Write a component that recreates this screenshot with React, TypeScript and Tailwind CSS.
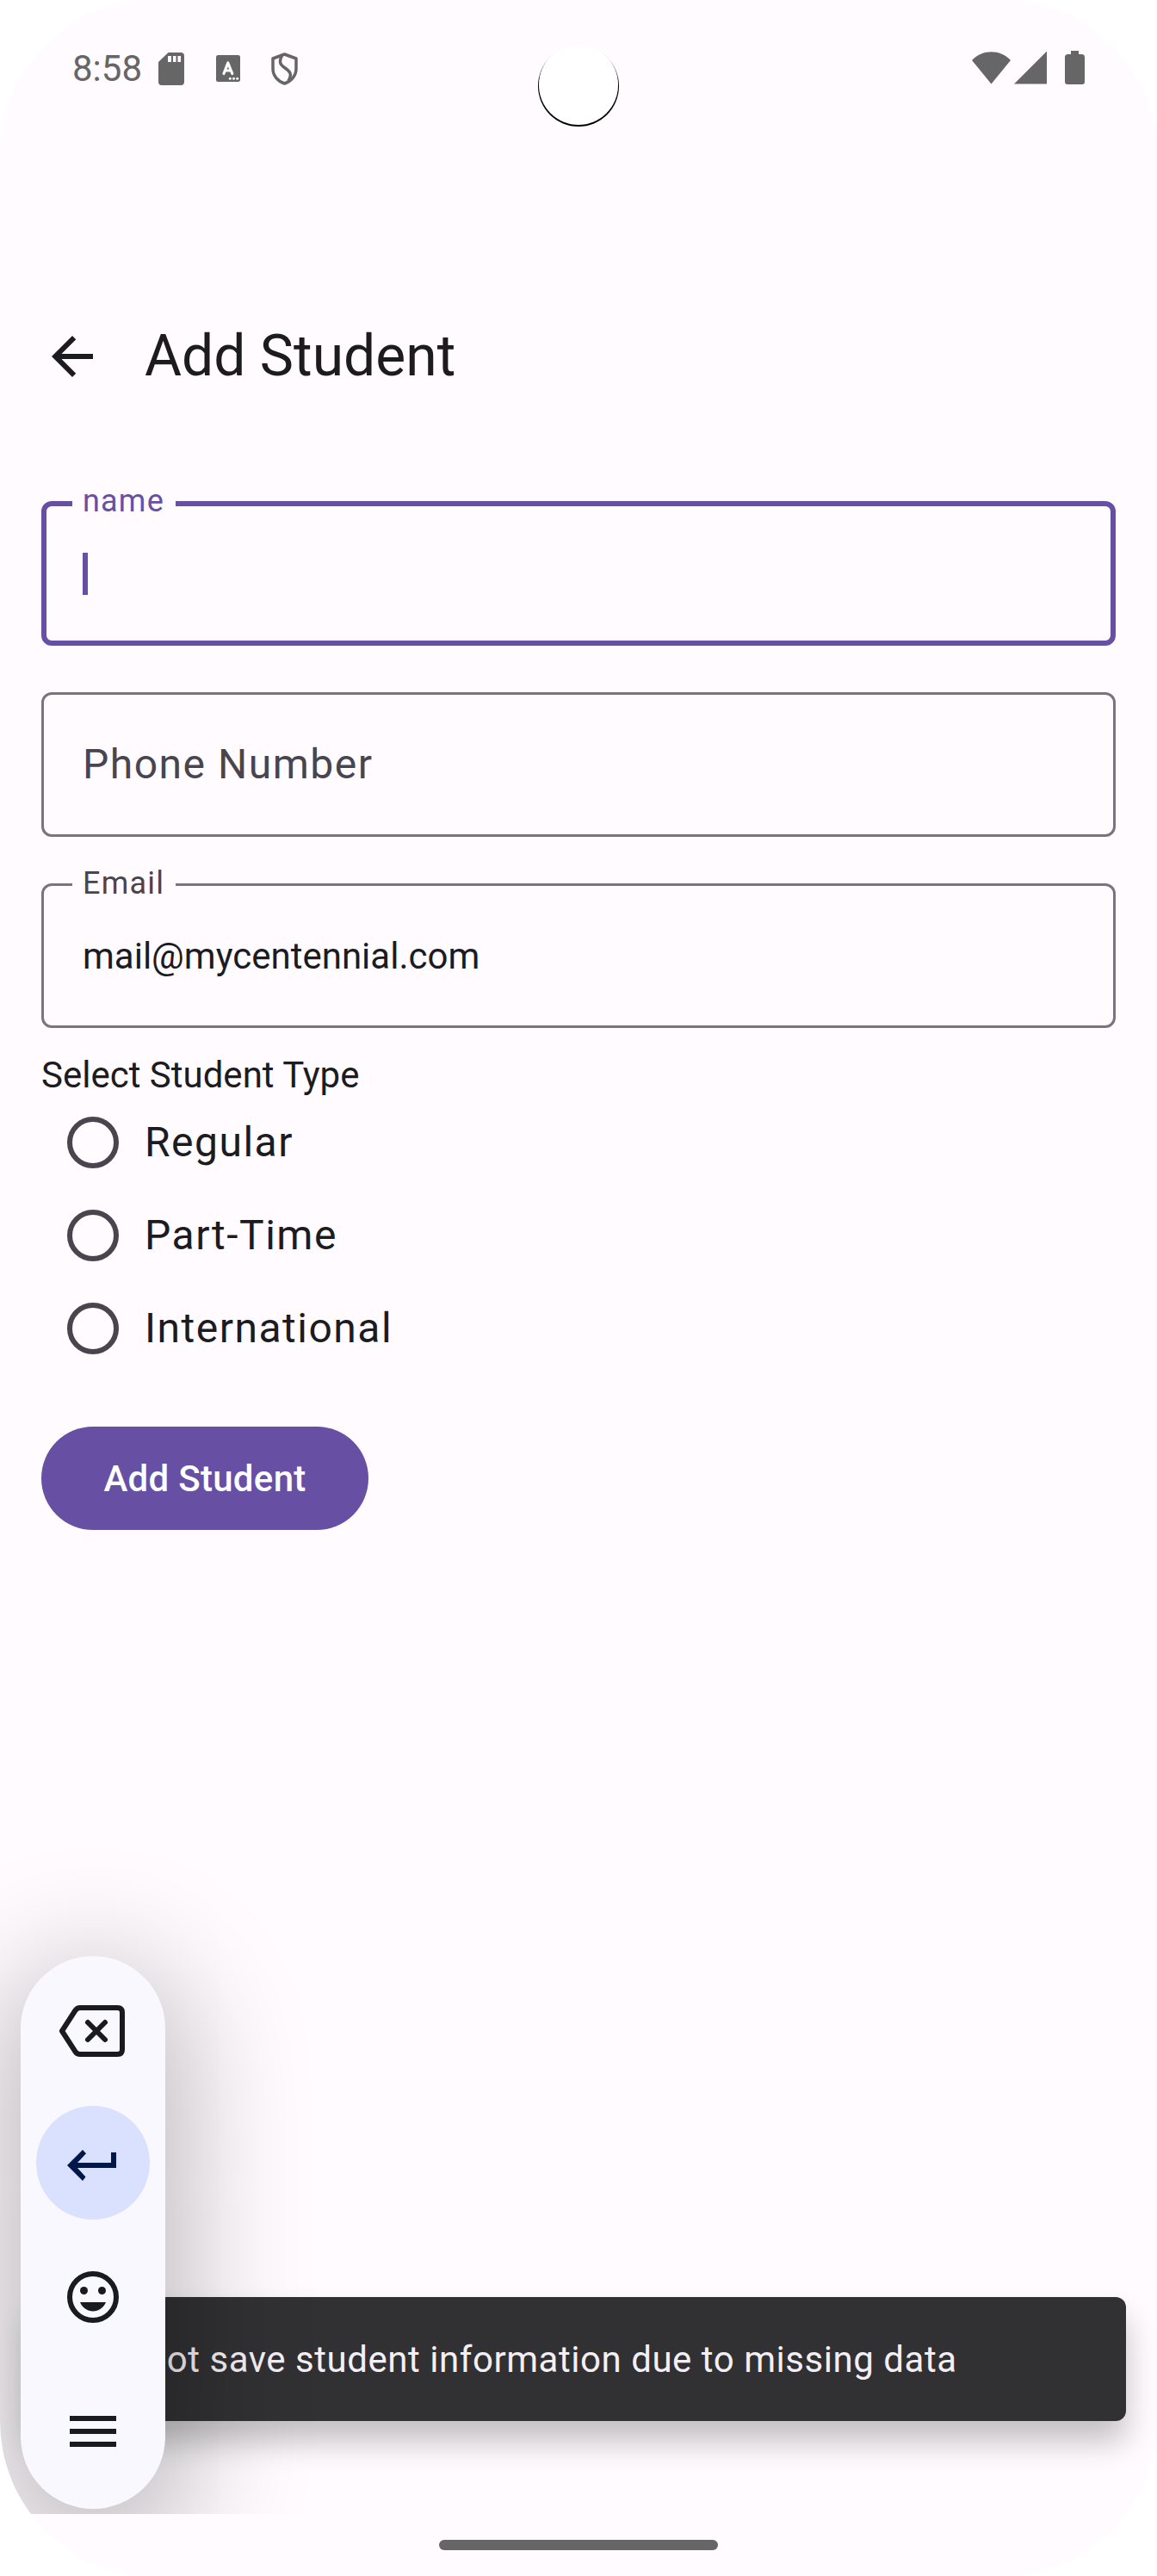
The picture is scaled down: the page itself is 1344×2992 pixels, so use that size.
import React from "react";

function OutlinedField({ label, focused, children }: { label?: string; focused?: boolean; children?: React.ReactNode }) {
  return (
    <div
      className={
        focused
          ? "relative flex h-[168px] items-center rounded-xl border-[6px] border-[#6750a4] pl-[42px]"
          : "relative flex h-[168px] items-center rounded-xl border-[3px] border-[#79747e] pl-[45px]"
      }
    >
      {label && (
        <span
          className={
            focused
              ? "absolute -top-[30px] left-[30px] w-[120px] bg-[#fffbff] pl-3 text-[36px] leading-[48px] tracking-[1.2px] text-[#6750a4]"
              : "absolute -top-[27px] left-[33px] w-[120px] bg-[#fffbff] pl-3 text-[36px] leading-[48px] tracking-[1.2px] text-[#49454f]"
          }
        >
          {label}
        </span>
      )}
      {children}
    </div>
  );
}

function StatusBar() {
  return (
    <header className="flex h-[156px] items-start justify-between pt-[55px] pr-[84px] pl-[84px] text-[#666]">
      <div className="flex h-[49px] items-center">
        <span className="w-[100px] text-[42px] leading-[49px]">8:58</span>
        <svg width="30" height="38" viewBox="0 0 30 38" fill="currentColor">
          <path fillRule="evenodd" d="M11.5 0H26q4 0 4 4v30q0 4-4 4H4q-4 0-4-4V11zM11 4v7h4V4zm6 0v7h3.500V4zm5.500 0v7H26V4z" />
        </svg>
        <svg className="ml-[37px]" width="28" height="31" viewBox="0 0 28 31">
          <rect width="28" height="31" rx="2.500" fill="currentColor" />
          <path d="M9 21.500 13.800 9l5 12.500M10.500 18h6.500" fill="none" stroke="#fffbff" strokeWidth="3.200" strokeLinecap="round" strokeLinejoin="round" />
          <g fill="#fffbff">
            <circle cx="16.300" cy="27.300" r="1.500" />
            <circle cx="20.500" cy="27.300" r="1.500" />
            <circle cx="24.700" cy="27.300" r="1.500" />
          </g>
        </svg>
        <svg className="ml-9" width="31" height="38" viewBox="0 0 31 38" fill="none" stroke="currentColor" strokeWidth="3.500" strokeLinejoin="round">
          <path d="M15.500 2 29 7v12c0 8-6 14.500-13.500 17C8 33.500 2 27 2 19V7z" />
          <path d="M12.500 3.500C9 11 10 13.500 15.500 17.500 22.500 22.500 24.500 25 20 33" />
        </svg>
      </div>
      <svg className="mt-1" width="132" height="40" viewBox="0 0 132 40" fill="currentColor">
        <path d="M1 11C13-2 34-2 46 11L23.500 38.500z" />
        <path d="M88 .500v38H50z" />
        <path d="M116 0h9v4h3.500q3.500 0 3.500 3.500V36q0 3-3 3h-17q-3 0-3-3V7.500Q109 4 112.500 4h3.500z" />
      </svg>
    </header>
  );
}

function InputPill() {
  return (
    <aside className="absolute top-[2272px] left-6 flex h-[642px] w-[168px] flex-col items-center rounded-[84px] bg-[#f9f8ff] pt-[18px] text-[#1a1b20] shadow-[0_36px_140px_26px_rgba(0,0,0,0.26)]">
      <div className="flex h-[138px] w-full items-center pl-[45px]">
        <svg width="76" height="60" viewBox="0 0 76 60" fill="none" stroke="currentColor" strokeWidth="6">
          <path d="M3 30 18.500 6Q20.500 3 24 3H67.500Q73 3 73 8.500v43Q73 57 67.500 57H24q-3.500 0-5.500-3z" />
          <path d="m33 20 20 20M53 20 33 40" strokeLinecap="round" />
        </svg>
      </div>
      <div className="mt-[18px] flex h-[132px] w-[132px] shrink-0 items-center rounded-full bg-[#dae1ff] pl-9 text-[#001849]">
        <svg className="mt-[6px]" width="57" height="36" viewBox="0 0 57 36" fill="currentColor">
          <path d="M51 3h6v18H12l9.500 10.500L18 36 0 18 18 0l4 4.200L12 15h39z" />
        </svg>
      </div>
      <div className="mt-6 flex h-[132px] shrink-0 items-center">
        <svg width="60" height="60" viewBox="0 0 60 60">
          <circle cx="30" cy="30" r="27" fill="none" stroke="currentColor" strokeWidth="6" />
          <circle cx="19.500" cy="22.500" r="4.500" fill="currentColor" />
          <circle cx="40.500" cy="22.500" r="4.500" fill="currentColor" />
          <path d="M15 36h30c-2.500 6.300-8.300 10.500-15 10.500S17.500 42.300 15 36z" fill="currentColor" />
        </svg>
      </div>
      <div className="mt-6 flex h-[132px] w-[54px] shrink-0 flex-col justify-center gap-[9px]">
        <i className="h-[6px] bg-current" />
        <i className="h-[6px] bg-current" />
        <i className="h-[6px] bg-current" />
      </div>
    </aside>
  );
}

export default function App() {
  return (
    <div className="h-[2992px] w-[1344px] bg-white font-['Roboto',sans-serif]">
      <div className="relative flex h-full flex-col overflow-hidden rounded-[180px] bg-[#fffbff] text-[#1c1b1f]">
        <StatusBar />
        <div className="absolute top-[53px] left-[625px] size-[94px] rounded-full bg-black">
          <div className="absolute -top-px left-px h-[93px] w-[92px] rounded-full bg-white" />
        </div>

        <div className="mt-[162px] flex h-[192px] items-center pl-12">
          <svg width="72" height="72" viewBox="0 0 24 24" fill="currentColor">
            <path d="M20 11H7.830l5.590-5.590L12 4l-8 8 8 8 1.410-1.410L7.830 13H20z" />
          </svg>
          <h1 className="ml-12 text-[66px] leading-[84px]">Add Student</h1>
        </div>

        <form className="mt-[72px] flex flex-col px-12">
          <OutlinedField label="name" focused>
            <span className="h-[49px] w-[6px] bg-[#6750a4]" />
          </OutlinedField>
          <div className="h-[54px]" />
          <OutlinedField>
            <span className="text-[48px] leading-[72px] tracking-[1.5px] text-[#49454f]">Phone Number</span>
          </OutlinedField>
          <div className="h-[54px]" />
          <OutlinedField label="Email">
            <span className="text-[42px] leading-[49px]">mail@mycentennial.com</span>
          </OutlinedField>

          <p className="mt-[30px] text-[42px] leading-[49px]">Select Student Type</p>
          {["Regular", "Part-Time", "International"].map((type) => (
            <label key={type} className="flex h-[108px] items-center pl-[30px]">
              <span className="size-[60px] rounded-full border-[6px] border-[#49454f]" />
              <span className="ml-[30px] text-[48px] leading-[72px] tracking-[1.5px]">{type}</span>
            </label>
          ))}
          <button type="button" className="mt-[60px] h-[120px] w-[380px] rounded-full bg-[#6750a4] text-[42px] font-medium tracking-[0.3px] text-white">
            Add Student
          </button>
        </form>

        <div className="absolute inset-x-0 top-0 h-[2920px] overflow-hidden">
          <div className="absolute top-[2668px] left-9 flex h-[144px] w-[1272px] items-center rounded-xl bg-[#313033] pl-12 text-[42px] tracking-[0.54px] text-[#f4eff4] shadow-[0_24px_36px_rgba(0,0,0,0.24)]">
            Can not save student information due to missing data
          </div>
          <InputPill />
        </div>
        <div className="absolute bottom-[30px] left-[510px] h-3 w-[324px] rounded-full bg-[#666]" />
      </div>
    </div>
  );
}
